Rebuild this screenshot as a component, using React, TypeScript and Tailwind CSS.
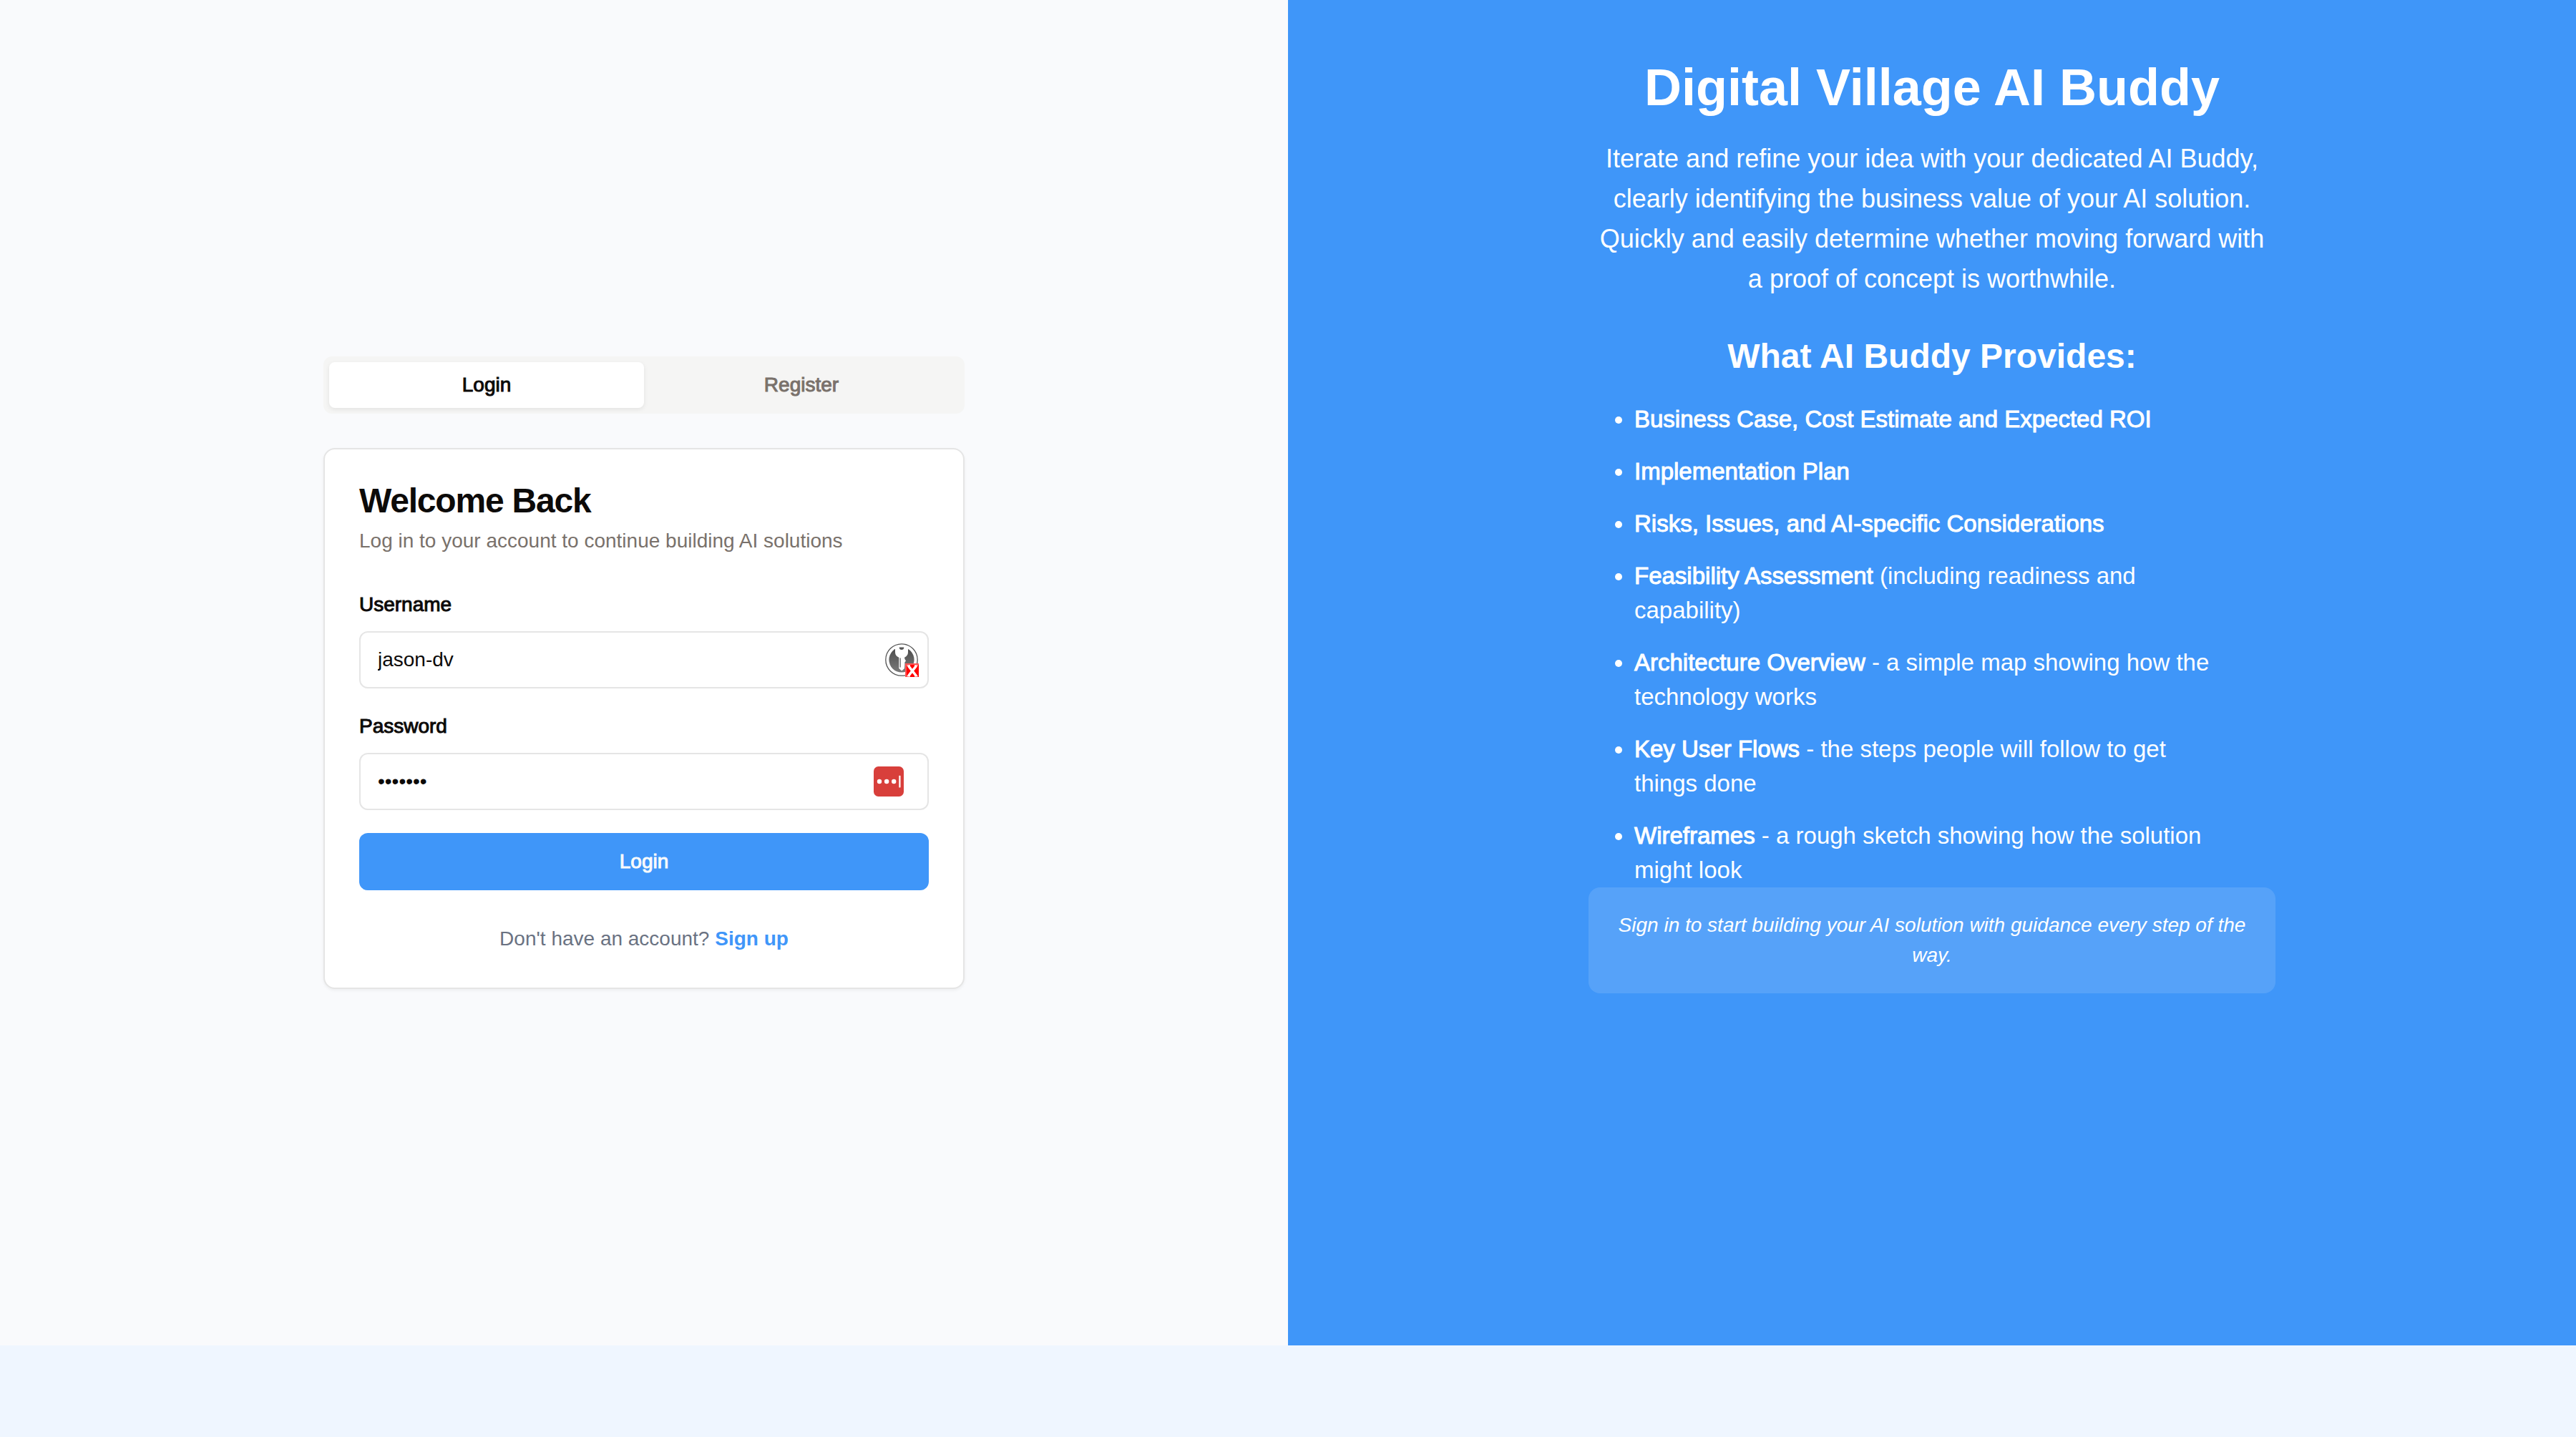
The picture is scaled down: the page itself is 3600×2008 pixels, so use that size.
import { useState } from "react";

type Feature = { name: string; detail?: string };

const features: Feature[] = [
  { name: "Business Case, Cost Estimate and Expected ROI" },
  { name: "Implementation Plan" },
  { name: "Risks, Issues, and AI-specific Considerations" },
  { name: "Feasibility Assessment", detail: "(including readiness and capability)" },
  { name: "Architecture Overview", detail: "- a simple map showing how the technology works" },
  { name: "Key User Flows", detail: "- the steps people will follow to get things done" },
  { name: "Wireframes", detail: "- a rough sketch showing how the solution might look" },
];

/* Password-manager badge: key in a ring with a red "not connected" mark. */
function KeyIcon() {
  return (
    <svg viewBox="0 0 48 48" className="size-12" aria-hidden="true">
      <defs>
        <linearGradient id="disc" x1="0" y1="0" x2="0" y2="1">
          <stop offset="0" stopColor="#4a4a4a" />
          <stop offset="1" stopColor="#7a7a7a" />
        </linearGradient>
      </defs>
      <circle cx="24" cy="24" r="22.2" fill="#fff" stroke="#555" strokeWidth="1.3" />
      <circle cx="24" cy="24" r="17.6" fill="url(#disc)" />
      <path
        d="M15 5.500 L33 5.500 L33 13.500 C33 17 31 19.300 28.200 20.500 L28.200 22.500 L30 25.500 L28.400 27.500 L28.400 31 L28 36 L24.200 39.500 L20.300 36 L20.300 20.700 C17 19.500 15 17 15 13.500 Z"
        fill="#fff"
      />
      <path d="M20.800 6.500 H27.200 V8 Q26.500 10 24 10 Q21.500 10 20.800 8 Z" fill="#555" />
      <path d="M22.200 21.500 V34.500" stroke="#666" strokeWidth="1.300" />
      <rect x="29" y="29" width="19" height="19" fill="#f55" />
      <rect x="31" y="31" width="17" height="17" fill="#f00" />
      <path d="M33.500 32.500 L44.500 46.500 M44.500 32.500 L33.500 46.500" stroke="#fff" strokeWidth="3.600" />
      <path d="M31.500 32 H36 M42 32 H46.500 M31.500 46.800 H36 M42 46.800 H46.500" stroke="#fff" strokeWidth="1.400" />
    </svg>
  );
}

function DotsIcon() {
  return (
    <svg viewBox="0 0 42 42" className="size-[42px]" aria-hidden="true">
      <rect width="42" height="42" rx="6.500" fill="#d83f3b" />
      <circle cx="8" cy="21" r="3.200" fill="#fff" />
      <circle cx="18.100" cy="21" r="3.200" fill="#fff" />
      <circle cx="28.200" cy="21" r="3.200" fill="#fff" />
      <rect x="35.300" y="12.800" width="2.200" height="16.600" rx="0.600" fill="#fff" />
    </svg>
  );
}

const inputClass =
  "block h-20 w-full rounded-xl border-2 border-[#e5e5e5] bg-white pl-6 pr-24 text-[28px] leading-10 text-stone-950 outline-none";
const labelClass = "block text-[28px] leading-[42px] [-webkit-text-stroke:1px]";

export default function App() {
  const [username, setUsername] = useState("jason-dv");
  const [password, setPassword] = useState("buddy12");

  return (
    <div className="flex min-h-screen flex-col bg-blue-50 pb-32 font-['Liberation_Sans',Arial,sans-serif] text-stone-950">
      <main className="grid flex-1 grid-cols-1 lg:grid-cols-2">
        <section className="flex items-center justify-center bg-[#f9fafc] p-8">
          <div className="flex w-full max-w-[896px] flex-col gap-12">
            <div role="tablist" className="grid grid-cols-2 rounded-xl bg-stone-100 p-2">
              <button
                type="button"
                role="tab"
                aria-selected="true"
                className="h-16 rounded-lg bg-white text-[28px] leading-10 shadow-[0_2px_6px_rgba(0,0,0,0.08)] [-webkit-text-stroke:1px]"
              >
                Login
              </button>
              <button
                type="button"
                role="tab"
                aria-selected="false"
                className="h-16 rounded-lg text-[28px] leading-10 text-stone-500 [-webkit-text-stroke:1px]"
              >
                Register
              </button>
            </div>

            <div className="flex flex-col gap-12 rounded-2xl border-2 border-[#e5e5e5] bg-white p-12 shadow-[0_2px_4px_rgba(0,0,0,0.05)]">
              <header className="flex flex-col gap-3">
                <h1 className="text-5xl leading-none font-bold tracking-tight">Welcome Back</h1>
                <p className="text-[28px] leading-10 text-stone-500">
                  Log in to your account to continue building AI solutions
                </p>
              </header>

              <form className="flex flex-col gap-8" onSubmit={(e) => e.preventDefault()}>
                <div className="flex flex-col gap-4">
                  <label htmlFor="username" className={labelClass}>
                    Username
                  </label>
                  <div className="relative">
                    <input
                      id="username"
                      type="text"
                      value={username}
                      onChange={(e) => setUsername(e.target.value)}
                      className={inputClass}
                    />
                    <span className="absolute inset-y-0 right-3.5 flex items-center">
                      <KeyIcon />
                    </span>
                  </div>
                </div>
                <div className="flex flex-col gap-4">
                  <label htmlFor="password" className={labelClass}>
                    Password
                  </label>
                  <div className="relative">
                    <input
                      id="password"
                      type="password"
                      value={password}
                      onChange={(e) => setPassword(e.target.value)}
                      className={inputClass}
                    />
                    <span className="absolute inset-y-0 right-[35px] flex items-center">
                      <DotsIcon />
                    </span>
                  </div>
                </div>
                <button
                  type="submit"
                  className="h-20 rounded-xl bg-[#3f96f9] text-[28px] leading-10 text-slate-50 [-webkit-text-stroke:1px]"
                >
                  Login
                </button>
              </form>

              <p className="text-center text-[28px] leading-10 text-gray-500">
                Don't have an account?{" "}
                <a href="#register" className="font-bold text-[#3f96f9]">
                  Sign up
                </a>
              </p>
            </div>
          </div>
        </section>

        <section className="flex justify-center bg-[#3f96f9] px-8 pt-[82px] pb-8 text-white">
          <div className="w-full max-w-[960px]">
            <h2 className="text-center text-7xl leading-[80px] font-bold">Digital Village AI Buddy</h2>
            <p className="mt-8 px-2 text-center text-4xl leading-14">
              Iterate and refine your idea with your dedicated AI Buddy, clearly identifying the business value of your
              AI solution. Quickly and easily determine whether moving forward with a proof of concept is worthwhile.
            </p>
            <h3 className="mt-12 text-center text-5xl leading-16 font-bold">What AI Buddy Provides:</h3>
            <ul className="mx-8 mt-8 flex list-disc flex-col gap-[25px] px-8 text-[33px] leading-12">
              {features.map((f) => (
                <li key={f.name}>
                  <span className="[-webkit-text-stroke:1px]">{f.name}</span>
                  {f.detail && ` ${f.detail}`}
                </li>
              ))}
            </ul>
            <p className="rounded-2xl bg-white/12 p-8 text-center text-[28px] leading-[42px] italic">
              Sign in to start building your AI solution with guidance every step of the way.
            </p>
          </div>
        </section>
      </main>
    </div>
  );
}
